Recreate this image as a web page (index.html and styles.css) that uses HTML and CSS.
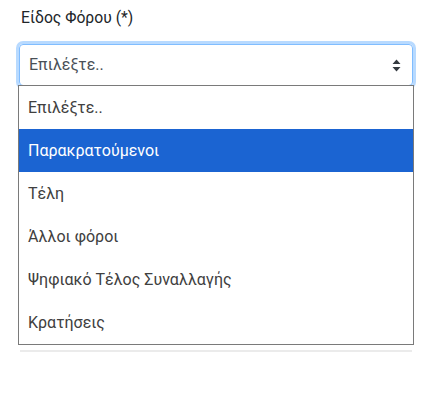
FILE: index.html
```html
<!DOCTYPE html>
<html lang="el">
<head>
<meta charset="utf-8">
<link rel="stylesheet" href="styles.css">
</head>
<body>
<div class="field">
  <label class="label">Είδος Φόρου (*)</label>
  <div class="select-wrap">
    <div class="select">
      <span class="value">Επιλέξτε..</span>
      <svg class="arrows" width="9" height="13" viewBox="0 0 9 13"><path d="M4.5 0.5 L8.5 5 L0.5 5 Z M0.5 8 L8.5 8 L4.5 12.5 Z" fill="#343a40"/></svg>
    </div>
    <ul class="menu">
      <li>Επιλέξτε..</li>
      <li class="active">Παρακρατούμενοι</li>
      <li>Τέλη</li>
      <li>Άλλοι φόροι</li>
      <li>Ψηφιακό Τέλος Συναλλαγής</li>
      <li>Κρατήσεις</li>
    </ul>
  </div>
</div>
</body>
</html>
```
FILE: styles.css
```css
html, body {
  margin: 0;
  padding: 0;
  background: #fff;
  font-family: Roboto, "Liberation Sans", Arial, sans-serif;
}
.field {
  padding: 9px 16px 0 19px;
  width: 394px;
}
.label {
  display: block;
  font-size: 15.7px;
  line-height: 18px;
  color: #212529;
  padding-left: 2px;
  margin-bottom: 17px;
}
.select-wrap {
  position: relative;
  height: 308px;
}
.select {
  box-sizing: border-box;
  height: 42px;
  border: 1px solid #80bdff;
  border-radius: 4px;
  box-shadow: 0 0 0 3px rgba(0, 123, 255, 0.28);
  display: flex;
  align-items: center;
  justify-content: space-between;
  padding: 0 11px 0 9px;
  font-size: 16px;
  color: #495057;
}
.value { padding-bottom: 1px; }
.arrows { display: block; }
.menu {
  position: absolute;
  top: 41px;
  left: -1px;
  width: 396px;
  box-sizing: border-box;
  margin: 0;
  padding: 0;
  list-style: none;
  background: #fff;
  border: 1px solid #7a7a7a;
  font-size: 16px;
  color: #404040;
}
.menu::after {
  content: "";
  position: absolute;
  left: 1px;
  right: 1px;
  bottom: -8px;
  height: 2px;
  background: #ebebeb;
}
.menu li {
  height: 43px;
  line-height: 43px;
  padding-left: 9px;
}
.menu li.active {
  background: #1b64d2;
  color: #fff;
}
```
